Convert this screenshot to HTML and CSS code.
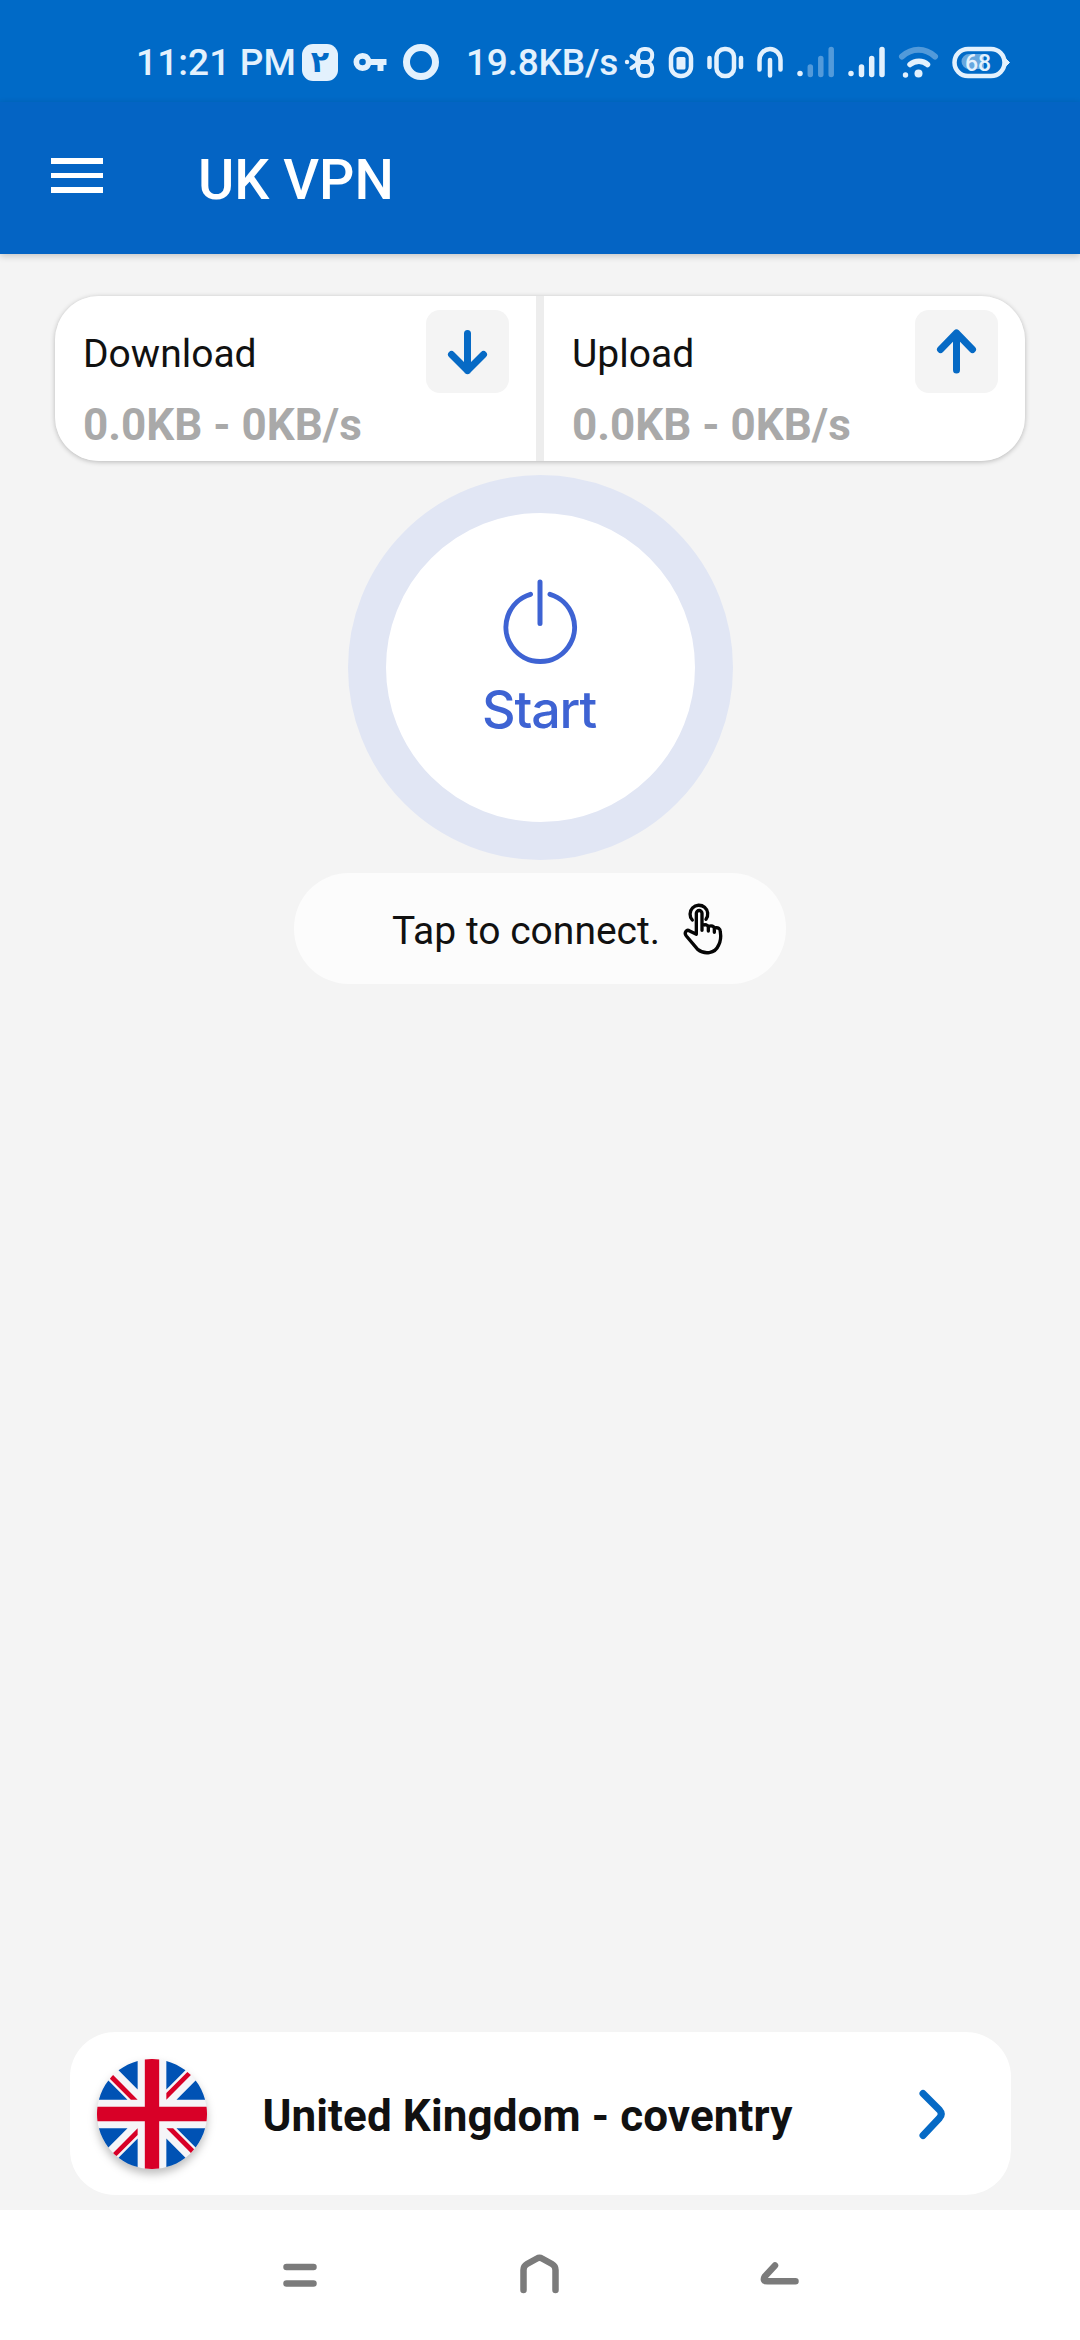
FILE: index.html
```html
<!DOCTYPE html>
<html lang="en">
<head>
<meta charset="utf-8">
<title>UK VPN</title>
<link rel="stylesheet" href="styles.css">
</head>
<body>
<div class="screen">
  <div class="status">
    <span class="status-text clock">11:21 PM</span>
    <span class="badge">٢</span>
    <svg class="key" width="36" height="36" viewBox="0 0 24 24" fill="currentColor"><path d="M12.65 10A6 6 0 0 0 7 6a6 6 0 0 0 0 12 6 6 0 0 0 5.65-4H17v4h4v-4h2v-4H12.65zM7 14.2a2.2 2.2 0 1 1 0-4.4 2.2 2.2 0 0 1 0 4.4z"/></svg>
    <span class="ring"></span>
    <span class="status-text speed">19.8KB/s</span>
    <svg class="glyphs" width="390" height="36" viewBox="622 44 390 36" fill="none" stroke="currentColor" stroke-width="4.500" stroke-linecap="round" stroke-linejoin="round">
      <circle cx="627" cy="62" r="2.200" fill="currentColor" stroke="none"/>
      <path d="M631.500 56L640 62L631.500 68M637 62H648M640 62C636 57 638 49 644 49h2c8 0 8 11 1.500 13 6.500 2 6.500 14-1.500 14h-2c-6 0-8-8-4-14" stroke-width="4"/>
      <rect x="671" y="49" width="20" height="27" rx="9.500"/><rect x="676.500" y="57" width="9" height="12.500" rx="1.500" fill="currentColor" stroke="none"/>
      <rect x="716.500" y="49" width="17.500" height="27" rx="8"/><path d="M709.500 58v9M741 58v9"/>
      <path d="M759.500 69.500V60a10.500 11 0 0 1 21 0v9.500M770 60v15.500"/>
      <g stroke-width="5.500"><path d="M800 73.500v.1"/><g opacity=".36"><path d="M810.300 67v7.500M820.800 58.500v16M831.200 49.500v25"/></g><path d="M851 73.500v.1M861.500 67v7.500M871.700 58.500v16M882 49.500v25"/></g>
      <path d="M902 56.500c10-9 23-9 33 0" stroke-width="6" opacity=".36"/><path d="M910 64.500c5-4.500 13-4.500 17.500 0" stroke-width="5.500"/><circle cx="905.500" cy="75" r="2.700" fill="currentColor" stroke="none"/><circle cx="918.500" cy="73.500" r="4" fill="currentColor" stroke="none"/>
      <rect x="954.500" y="49" width="50" height="27" rx="13.500"/><path d="M1006 59l3.500 3.500-3.500 3.500z" stroke-width="1" fill="currentColor"/>
      <path d="M969 54h15v15h-15a7.500 7.500 0 0 1 0-15z" fill="currentColor" stroke="none" opacity=".45"/>
      <text class="battery" x="978" y="70.800" text-anchor="middle">68</text>
    </svg>
  </div>
  <header class="appbar">
    <div class="menu"><i></i><i></i><i></i></div>
    <h1 class="title">UK VPN</h1>
  </header>
  <main class="main">
    <section class="traffic">
      <div class="meter">
        <div class="meter-head"><span class="label">Download</span>
          <span class="arrow"><svg width="84" height="83" viewBox="0 0 84 83"><path d="M41.500 23.500V60.500M25.500 44.500L41.500 60.500L57.500 44.500"/></svg></span></div>
        <div class="rate">0.0KB - 0KB/s</div>
      </div>
      <div class="meter">
        <div class="meter-head"><span class="label">Upload</span>
          <span class="arrow"><svg width="84" height="83" viewBox="0 0 84 83"><path d="M41.500 60V23M25.500 39.500L41.500 23L57.500 39.500"/></svg></span></div>
        <div class="rate">0.0KB - 0KB/s</div>
      </div>
    </section>
    <div class="start">
      <svg width="80" height="88" viewBox="499 578 80 88" fill="none" stroke="#3e63d3" stroke-width="5" stroke-linecap="round"><path d="M539 582v41.500M529.500 594.300A34.300 34.300 0 1 0 549 594.300"/></svg>
      <span class="start-text">Start</span>
    </div>
    <div class="hint">
      <span class="hint-text">Tap to connect.</span>
      <svg class="hand" width="42" height="55" viewBox="1203 123 126 165" fill="none" stroke="#050505" stroke-width="10" stroke-linecap="round" stroke-linejoin="round"><path d="M1234 180A26.500 26.500 0 1 1 1275 178"/><path d="M1246 223V160a8.500 8.500 0 0 1 17 0V211M1263 196q16-5 19 5V213M1282 199q16-4 18 6V217M1300 204q18-4 18 12C1320 228 1318 245 1313 255C1302 282 1270 284 1250 268L1216 228C1208 218 1217 207 1226 213L1246 223"/></svg>
    </div>
    <section class="server">
      <svg class="flag" width="110" height="110" viewBox="0 0 512 512">
        <circle cx="256" cy="256" r="256" fill="#f5f5f8"/>
        <path fill="#0052b4" d="M52.920 100.142C32.811 126.305 17.648 156.460 8.819 189.219H141.997ZM503.181 189.219C494.352 156.461 479.188 126.306 459.080 100.143L370.005 189.219ZM8.819 322.784C17.649 355.542 32.812 385.697 52.920 411.859L141.994 322.784ZM411.858 52.921C385.695 32.812 355.541 17.649 322.782 8.819V141.996ZM100.142 459.079C126.305 479.188 156.460 494.351 189.218 503.181V370.005ZM189.217 8.819C156.459 17.649 126.304 32.812 100.142 52.920L189.217 141.995ZM322.783 503.181C355.541 494.351 385.696 479.188 411.858 459.080L322.783 370.005ZM370.005 322.784L459.080 411.860C479.188 385.698 494.352 355.542 503.181 322.784Z"/>
        <path fill="#d80027" d="M509.833 222.609H289.392V2.167A258 258 0 0 0 222.609 2.167V222.608H2.167A258 258 0 0 0 2.167 289.391H222.608V509.833A258 258 0 0 0 289.391 509.833V289.392H509.833A258 258 0 0 0 509.833 222.609ZM322.783 322.784L437.019 437.020Q445 429 452.067 420.585L354.265 322.784ZM189.217 322.784L74.980 437.019Q83 445 91.415 452.067L189.217 354.263ZM189.217 189.217L74.981 74.980Q67 83 59.933 91.415L157.736 189.218ZM322.783 189.219L437.020 74.981Q429 67 420.585 59.934L322.783 157.737Z"/>
      </svg>
      <span class="server-name">United Kingdom - coventry</span>
      <svg class="chevron" width="30" height="54" viewBox="916 2086 30 54" fill="none" stroke="#066ac5" stroke-width="7" stroke-linecap="round" stroke-linejoin="round"><path d="M922 2092.500L938.500 2109Q942 2113 938.500 2117L922 2134.500"/></svg>
    </section>
  </main>
  <nav class="nav">
    <svg width="540" height="50" viewBox="270 2250 540 50" fill="none" stroke="#7b7b7b" stroke-width="6.500" stroke-linecap="round" stroke-linejoin="round">
      <path d="M286.500 2267H313.500M286.500 2283.500H313.500"/>
      <path d="M523.500 2290V2270Q523.500 2266 527 2264L537 2258.500Q539.500 2257 542 2258.500L552 2264Q555.500 2266 555.500 2270V2290"/>
      <path d="M775 2265.500L764.800 2276.500Q762 2281.300 767.500 2281.300H795.500"/>
    </svg>
  </nav>
</div>
</body>
</html>
```
FILE: styles.css
```css
* { box-sizing: border-box; }
body { margin: 0; font-family: Roboto, "Liberation Sans", sans-serif; background: #f4f4f4; }
svg { display: block; flex: none; }
.screen { width: 1080px; height: 2340px; display: flex; flex-direction: column; overflow: hidden; }

.status { height: 102px; background: #006ac7; color: #e3f1fd; display: flex; align-items: center; padding: 22px 0 0 136px; flex: none; }
.status-text { font-size: 37px; font-weight: 500; line-height: 42px; white-space: nowrap; margin-top: 2px; }
.clock { width: 166px; letter-spacing: .1px; }
.badge { width: 36px; height: 37px; border-radius: 11px; background: #e3f1fd; color: #006ac7; font: bold 30px/36px "DejaVu Sans", sans-serif; text-align: center; }
.key { margin-left: 14px; }
.ring { width: 36px; height: 36px; border: 7px solid #e3f1fd; border-radius: 50%; margin-left: 15px; }
.speed { margin-left: 27px; width: 156px; letter-spacing: -.2px; }
.battery { font: 500 23px Roboto, sans-serif; fill: #e3f1fd; stroke: none; }

.appbar { height: 152px; background: #0464c4; display: flex; align-items: center; padding-left: 51px; flex: none; box-shadow: 0 2px 7px rgba(0,0,0,.2); }
.menu { width: 52px; display: flex; flex-direction: column; gap: 9px; margin-top: -5px; }
.menu i { height: 5.600px; background: #fff; }
.title { margin: 6px 0 0 95px; color: #fff; font-size: 55.500px; font-weight: 500; line-height: 64px; }

.main { flex: 1; display: flex; flex-direction: column; align-items: center; padding: 42px 0 15px; }
.traffic { width: 970px; height: 165px; border-radius: 44px; display: flex; gap: 8px; background: #ededed; overflow: hidden; box-shadow: 0 1px 5px rgba(0,0,0,.25); flex: none; }
.meter { flex: 1; background: #fff; padding: 14px 27px 0 28px; }
.meter-head { display: flex; justify-content: space-between; align-items: center; }
.label { font-size: 39px; line-height: 46px; color: #111; margin-top: 5px; }
.arrow { width: 83px; height: 83px; border-radius: 14px; background: #f4f4f4; }
.arrow svg { fill: none; stroke: #066ac5; stroke-width: 7; stroke-linecap: round; stroke-linejoin: round; }
.rate { font-size: 44px; line-height: 50px; font-weight: 700; color: #a9a9a9; margin-top: 7px; }

.start { width: 385px; height: 385px; border: 38.500px solid #e1e6f4; border-radius: 50%; background: #fff; margin-top: 14px; padding-top: 65px; display: flex; flex-direction: column; align-items: center; flex: none; }
.start-text { font: 500 52px/60px Inter, sans-serif; color: #3e63d3; letter-spacing: -1.200px; margin-top: 14px; margin-left: -2px; }

.hint { width: 492px; height: 111px; border-radius: 55px; background: #fcfcfc; margin-top: 13px; display: flex; align-items: center; padding-left: 98px; flex: none; }
.hint-text { font-size: 39px; line-height: 46px; color: #111; width: 290px; margin-top: 4px; white-space: nowrap; }

.server { width: 941px; height: 163px; border-radius: 45px; background: #fff; margin-top: auto; display: flex; align-items: center; padding: 0 64px 0 27px; flex: none; }
.flag { filter: drop-shadow(0 5px 4px rgba(0,0,0,.25)); }
.server-name { font-size: 44px; letter-spacing: .1px; line-height: 50px; font-weight: 700; color: #111; margin: 4px auto 0 56px; white-space: nowrap; }

.nav { height: 130px; background: #fff; display: flex; justify-content: center; padding-top: 40px; flex: none; }
```
